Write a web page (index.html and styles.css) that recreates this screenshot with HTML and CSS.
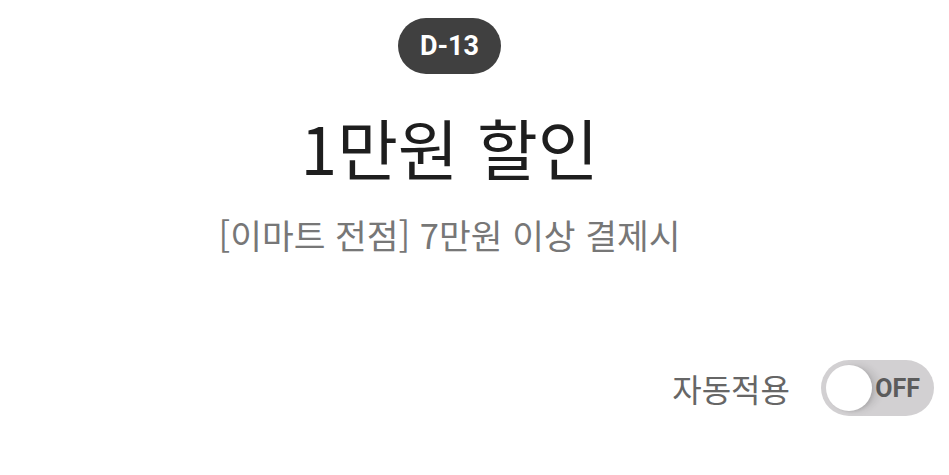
FILE: index.html
```html
<!DOCTYPE html>
<html lang="ko">
<head>
    <meta charset="UTF-8">
    <meta name="viewport" content="width=device-width, initial-scale=1.0">
    <title>쿠폰</title>
    <link rel="stylesheet" href="styles.css">
</head>
<body>
    <div class="coupon">
        <div class="coupon-info">
            <span class="d-day">D-13</span>
            <h1 class="coupon-title">1만원 할인</h1>
            <p class="coupon-desc">[이마트 전점] 7만원 이상 결제시</p>
        </div>
        <div class="auto-apply">
            <span class="auto-label">자동적용</span>
            <button class="toggle" type="button">
                <span class="toggle-knob"></span>
                <span class="toggle-text">OFF</span>
            </button>
        </div>
    </div>
</body>
</html>
```

FILE: styles.css
```css
body {
    margin: 0;
    padding: 0;
    background: #fff;
    font-family: "Noto Sans CJK KR", "Noto Sans", sans-serif;
    height: 100vh;
}

.coupon {
    height: 100%;
    display: flex;
    flex-direction: column;
}

.coupon-info {
    display: flex;
    flex-direction: column;
    align-items: center;
    padding: 18px 50px 0 0;
}

.d-day {
    display: inline-flex;
    align-items: center;
    height: 56px;
    padding: 0 22px;
    border-radius: 28px;
    background: #404040;
    color: #fff;
    font-family: Roboto, sans-serif;
    font-weight: 700;
    font-size: 27px;
}

.coupon-title {
    margin: 33px 0 0;
    font-size: 66px;
    font-weight: 400;
    line-height: 1.2;
    color: #1e1e1e;
}

.coupon-desc {
    margin: 28px 0 0;
    font-size: 34.5px;
    line-height: 1.2;
    color: #777;
}

.auto-apply {
    margin-top: auto;
    margin-bottom: 59px;
    padding-right: 15px;
    display: flex;
    justify-content: flex-end;
    align-items: center;
    gap: 31px;
}

.auto-label {
    font-size: 32px;
    color: #666;
}

.toggle {
    position: relative;
    width: 113px;
    height: 56px;
    border: none;
    border-radius: 28px;
    background: #d2d0d2;
    padding: 0 14px 0 0;
    display: flex;
    align-items: center;
    justify-content: flex-end;
    cursor: pointer;
}

/* knob casts a soft crescent to its right */
.toggle-knob {
    position: absolute;
    left: 5px;
    top: 5px;
    width: 46px;
    height: 46px;
    border-radius: 50%;
    background: #fff;
    box-shadow: 8px 0 6px rgba(0, 0, 0, 0.08), 2px 1px 3px rgba(0, 0, 0, 0.1);
}

.toggle-text {
    font-family: Roboto, sans-serif;
    font-weight: 700;
    font-size: 25px;
    color: #5c5c5c;
}
```
